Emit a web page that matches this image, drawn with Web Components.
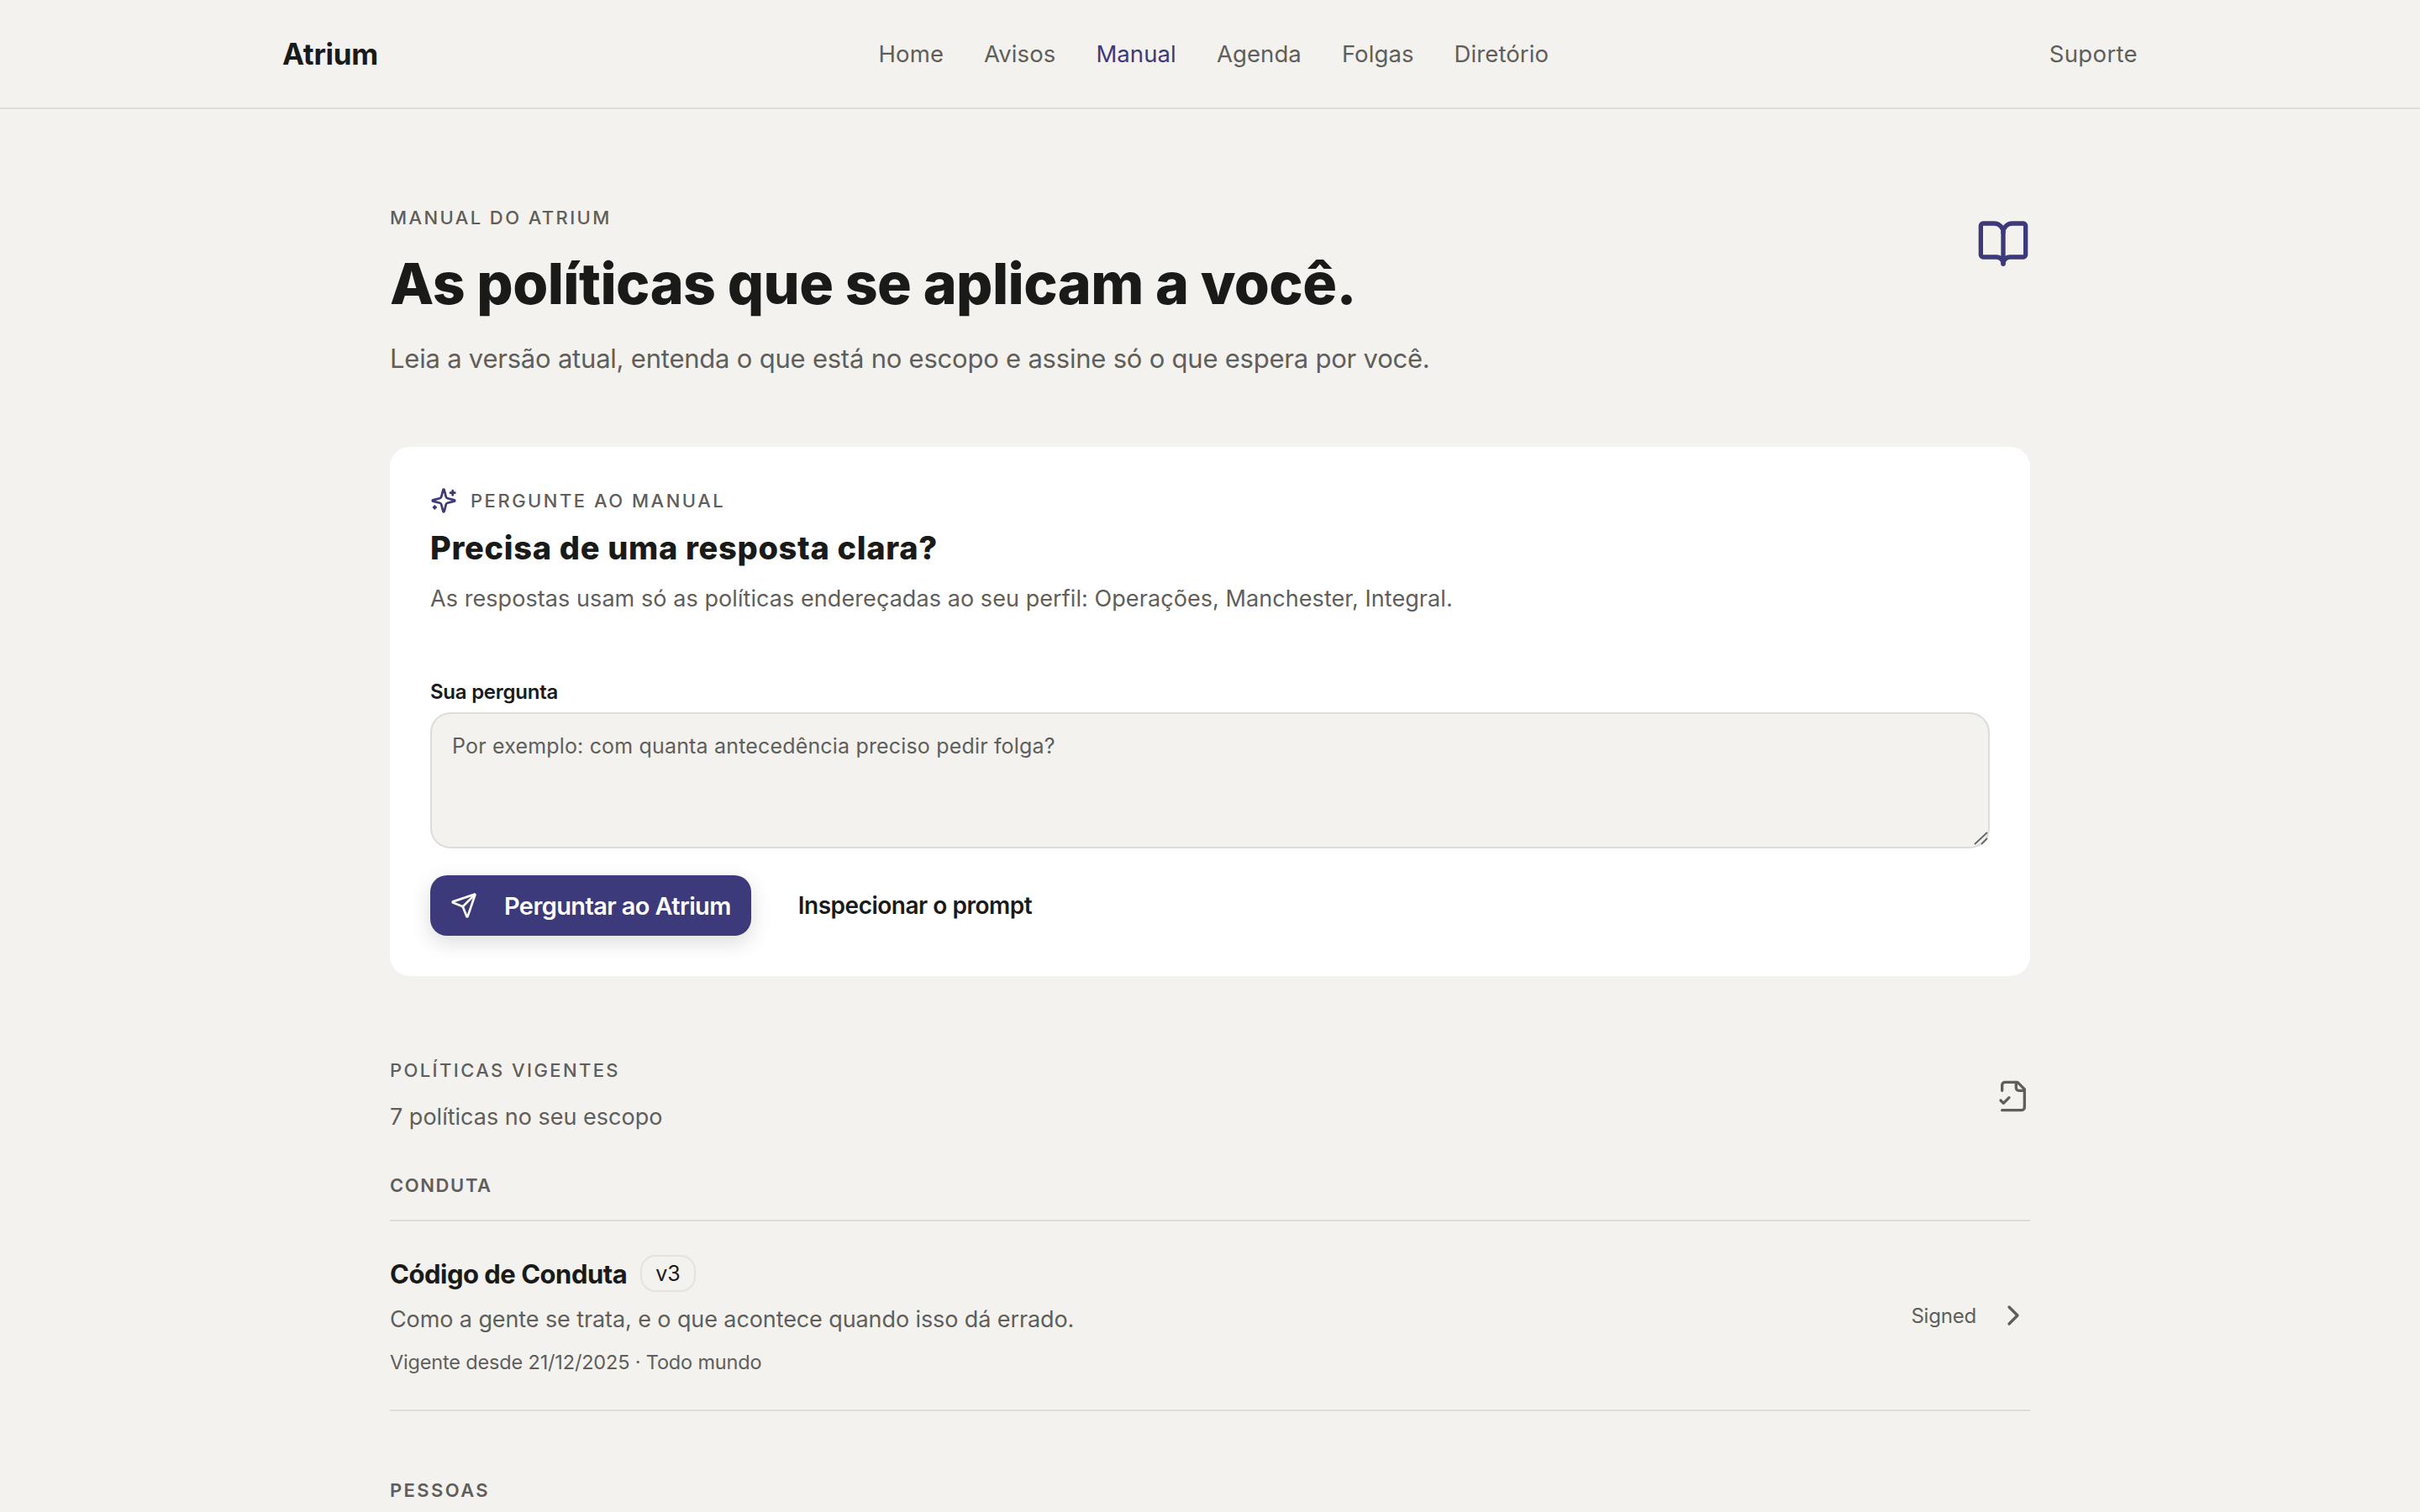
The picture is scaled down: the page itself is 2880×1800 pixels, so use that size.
<!DOCTYPE html>
<html lang="pt-BR">
<head>
<meta charset="utf-8">
<title>Atrium</title>
<style>
  html,body{margin:0;padding:0;background:#f3f2ee;overflow:hidden;height:1800px}
  body{font-family:"Inter","Liberation Sans",sans-serif;color:#1a1a18}
</style>
</head>
<body>
<at-header></at-header>
<at-main>
  <at-hero></at-hero>
  <at-ask></at-ask>
  <at-policies>
    <at-group name="Conduta" first ls="1.6">
      <at-policy title="Código de Conduta" ver="v3" desc="Como a gente se trata, e o que acontece quando isso dá errado." meta="Vigente desde 21/12/2025 · Todo mundo" status="Signed"></at-policy>
    </at-group>
    <at-group name="Pessoas" ls="2.4"></at-group>
  </at-policies>
</at-main>
<script>
const FONT='"Inter","Liberation Sans",sans-serif';
function def(name,html){
  customElements.define(name,class extends HTMLElement{
    connectedCallback(){
      if(this.shadowRoot)return;
      const r=this.attachShadow({mode:'open'});
      r.innerHTML=typeof html==='function'?html(this):html;
    }
  });
}
def('at-header',`<style>
:host{display:flex;justify-content:space-between;align-items:center;height:128px;border-bottom:2px solid #dddcd8;padding:0 336px;font-family:${FONT}}
.logo{font-size:35px;font-weight:700;letter-spacing:-.3px;color:#1a1a18}
nav{display:flex;gap:48px}
a{font-size:27.5px;color:#5f5e5a;text-decoration:none;letter-spacing:.1px}
a.on{color:#3c3a7a}
a.s{letter-spacing:.35px}
</style>
<span class="logo">Atrium</span>
<nav><a>Home</a><a>Avisos</a><a class="on">Manual</a><a>Agenda</a><a>Folgas</a><a>Diretório</a></nav>
<a class="s">Suporte</a>`);
def('at-main',`<style>:host{display:block;width:1952px;margin:0 auto;padding-top:112px}</style><slot></slot>`);
def('at-hero',`<style>
:host{display:flex;justify-content:space-between;align-items:flex-start;margin-bottom:81px}
.eb{font-size:22px;font-weight:500;letter-spacing:2.4px;color:#5f5e5a;line-height:34px}
h1{margin:17px 0 0;font-size:68px;line-height:88px;font-weight:800;letter-spacing:-.58px;color:#1a1a18}
p{margin:22px 0 0;font-size:31px;line-height:48px;color:#5f5e5a;letter-spacing:-.22px}
svg{width:64px;height:64px;margin-top:16px;flex:none}
</style>
<div><div class="eb">MANUAL DO ATRIUM</div><h1>As políticas que se aplicam a você.</h1><p>Leia a versão atual, entenda o que está no escopo e assine só o que espera por você.</p></div>
<svg viewBox="0 0 24 24" fill="none" stroke="#3c3a7a" stroke-width="2" stroke-linecap="round" stroke-linejoin="round"><path d="M12 7v14"/><path d="M3 18a1 1 0 0 1-1-1V4a1 1 0 0 1 1-1h5a4 4 0 0 1 4 4 4 4 0 0 1 4-4h5a1 1 0 0 1 1 1v13a1 1 0 0 1-1 1h-6a3 3 0 0 0-3 3 3 3 0 0 0-3-3z"/></svg>`);
def('at-ask',`<style>
:host{display:block;background:#fff;border-radius:24px;padding:48px;height:630px;box-sizing:border-box;margin-bottom:96px}
.k{display:flex;align-items:center;gap:16px;font-size:22px;font-weight:500;letter-spacing:2.5px;color:#5f5e5a;line-height:32px}
svg{flex:none;display:block}
.k svg{width:32px;height:32px}
h2{margin:12px 0 0;font-size:38px;line-height:56px;font-weight:800;letter-spacing:.68px;color:#1a1a18}
p{margin:11px 0 0;font-size:27px;line-height:44px;color:#5f5e5a;letter-spacing:.07px}
label{display:block;margin-top:73px;font-size:24px;line-height:32px;font-weight:600;color:#1a1a18;letter-spacing:-.25px}
.ta{box-sizing:border-box;height:162px;margin-top:8px;background:#f3f2ee;border:2px solid #dddcd8;border-radius:24px;padding:18px 24px;font-size:25px;line-height:40px;letter-spacing:.17px;color:#5f5e5a;position:relative}
.ta svg{position:absolute;right:0;bottom:0;width:20px;height:20px}
.acts{display:flex;align-items:center;gap:24px;margin-top:32px}
.b{display:flex;align-items:center;height:72px;box-sizing:border-box;font-weight:600}
.p{background:#3c3a7a;color:#fff;border-radius:20px;padding:0 24px;gap:32px;box-shadow:0 8px 24px rgba(40,40,40,.16);font-size:29px;letter-spacing:-.62px}
.p svg{width:32px;height:32px}
.g{padding:0 32px;color:#1a1a18;font-size:28px;letter-spacing:-.48px}
</style>
<div class="k"><svg viewBox="0 0 24 24" fill="none" stroke="#3c3a7a" stroke-width="2" stroke-linecap="round" stroke-linejoin="round"><path d="M9.937 15.5A2 2 0 0 0 8.5 14.063l-6.135-1.582a.5.5 0 0 1 0-.962L8.5 9.936A2 2 0 0 0 9.937 8.5l1.582-6.135a.5.5 0 0 1 .963 0L14.063 8.5A2 2 0 0 0 15.5 9.937l6.135 1.581a.5.5 0 0 1 0 .964L15.5 14.063a2 2 0 0 0-1.437 1.437l-1.582 6.135a.5.5 0 0 1-.963 0z"/><path d="M20 3v4"/><path d="M22 5h-4"/><path d="M4 17v2"/><path d="M5 18H3"/></svg><span>PERGUNTE AO MANUAL</span></div>
<h2>Precisa de uma resposta clara?</h2>
<p>As respostas usam só as políticas endereçadas ao seu perfil: Operações, Manchester, Integral.</p>
<label>Sua pergunta</label>
<div class="ta">Por exemplo: com quanta antecedência preciso pedir folga?<svg viewBox="0 0 20 20" stroke="#666" stroke-width="1.8"><path d="M4 17 19 3M12 17 19 10"/></svg></div>
<div class="acts"><div class="b p"><svg viewBox="0 0 24 24" fill="none" stroke="#fff" stroke-width="2" stroke-linecap="round" stroke-linejoin="round"><path d="M14.536 21.686a.5.5 0 0 0 .937-.024l6.5-19a.496.496 0 0 0-.635-.635l-19 6.5a.5.5 0 0 0-.024.937l7.93 3.18a2 2 0 0 1 1.112 1.11z"/><path d="m21.854 2.147-10.94 10.939"/></svg><span>Perguntar ao Atrium</span></div><div class="b g">Inspecionar o prompt</div></div>`);
def('at-policies',`<style>
:host{display:block}
.top{display:flex;justify-content:space-between;align-items:center}
.eb{font-size:22px;font-weight:500;letter-spacing:2.4px;color:#5f5e5a;line-height:32px}
.c{margin-top:18px;font-size:27px;line-height:44px;color:#5f5e5a}
svg{width:40px;height:40px;flex:none}
</style>
<div class="top"><div><div class="eb">POLÍTICAS VIGENTES</div><div class="c">7 políticas no seu escopo</div></div>
<svg viewBox="0 0 24 24" fill="none" stroke="#5f5e5a" stroke-width="2" stroke-linecap="round" stroke-linejoin="round"><path d="M4 22h14a2 2 0 0 0 2-2V7l-5-5H6a2 2 0 0 0-2 2v4"/><path d="M14 2v4a2 2 0 0 0 2 2h4"/><path d="m3 15 2 2 4-4"/></svg></div>
<slot></slot>`);
def('at-group',h=>`<style>
:host{display:block;margin-top:${h.hasAttribute('first')?'43px':'78px'}}
.eb{font-size:22px;font-weight:600;letter-spacing:${h.getAttribute('ls')}px;color:#5f5e5a;line-height:32px;padding-bottom:25px}
.eb.b{border-bottom:2px solid #dddcd8}
</style>
<div class="eb b">${h.getAttribute('name').toUpperCase()}</div><slot></slot>`);
def('at-policy',h=>`<style>
:host{display:flex;align-items:center;justify-content:space-between;border-bottom:2px solid #dddcd8;padding:40px 0 36px}
.t{display:flex;align-items:center;gap:16px;height:44px}
b{font-size:31px;font-weight:700;letter-spacing:-.5px;color:#1a1a18}
.v{box-sizing:border-box;height:44px;padding:0 16px;display:flex;align-items:center;border:2px solid #e4e3df;border-radius:18px;font-size:25px;color:#1a1a18}
.d{margin-top:11px;font-size:27px;line-height:44px;letter-spacing:-.1px;color:#5f5e5a}
.m{margin-top:9px;font-size:23.5px;line-height:40px;letter-spacing:-.17px;color:#5f5e5a}
.r{display:flex;align-items:center;gap:24px;margin-bottom:4px;font-size:24px;letter-spacing:-.2px;color:#5f5e5a}
svg{width:40px;height:40px}
</style>
<div><div class="t"><b>${h.getAttribute('title')}</b><span class="v">${h.getAttribute('ver')}</span></div><div class="d">${h.getAttribute('desc')}</div><div class="m">${h.getAttribute('meta')}</div></div>
<div class="r"><span>${h.getAttribute('status')}</span><svg viewBox="0 0 24 24" fill="none" stroke="#5f5e5a" stroke-width="2" stroke-linecap="round" stroke-linejoin="round"><path d="m9 18 6-6-6-6"/></svg></div>`);
</script>
</body>
</html>
